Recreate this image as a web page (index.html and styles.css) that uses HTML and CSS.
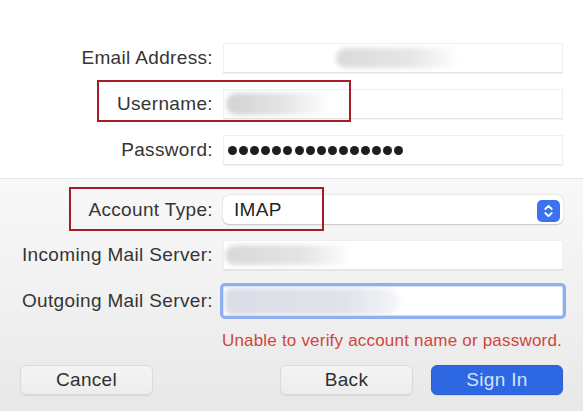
FILE: index.html
```html
<!DOCTYPE html>
<html>
<head>
<meta charset="utf-8">
<link rel="stylesheet" href="styles.css">
</head>
<body>
<div class="sheet">
  <div class="top">
    <div class="grid">
      <div class="lbl">Email Address:</div>
      <div class="field"><span class="blob blob-email"></span></div>
      <div class="lbl">Username:</div>
      <div class="field"><span class="blob blob-user"></span></div>
      <div class="lbl">Password:</div>
      <div class="field pw">
        <span class="dot"></span><span class="dot"></span><span class="dot"></span><span class="dot"></span>
        <span class="dot"></span><span class="dot"></span><span class="dot"></span><span class="dot"></span>
        <span class="dot"></span><span class="dot"></span><span class="dot"></span><span class="dot"></span>
        <span class="dot"></span><span class="dot"></span><span class="dot"></span><span class="dot"></span>
      </div>
    </div>
  </div>
  <div class="bottom">
    <div class="grid grid2">
      <div class="lbl">Account Type:</div>
      <div class="select">
        <span class="select-text">IMAP</span>
        <span class="stepper">
          <svg width="23" height="22" viewBox="0 0 23 22">
            <rect x="0" y="0" width="23" height="22" rx="5" fill="#3a72ef"/>
            <path d="M8.3 9 L11.5 5.8 L14.7 9" fill="none" stroke="#fff" stroke-width="1.8" stroke-linecap="round" stroke-linejoin="round"/>
            <path d="M8.3 13 L11.5 16.2 L14.7 13" fill="none" stroke="#fff" stroke-width="1.8" stroke-linecap="round" stroke-linejoin="round"/>
          </svg>
        </span>
      </div>
      <div class="lbl">Incoming Mail Server:</div>
      <div class="field"><span class="blob blob-in"></span></div>
      <div class="lbl">Outgoing Mail Server:</div>
      <div class="field focus"><span class="blob blob-out"></span></div>
    </div>
    <p class="error">Unable to verify account name or password.</p>
    <div class="buttons">
      <button class="btn">Cancel</button>
      <span class="spacer"></span>
      <button class="btn">Back</button>
      <button class="btn primary">Sign In</button>
    </div>
  </div>
  <div class="mark mark-user"></div>
  <div class="mark mark-type"></div>
</div>
</body>
</html>
```
FILE: styles.css
```css
html, body {
  margin: 0;
  padding: 0;
}
body {
  width: 583px;
  height: 411px;
  overflow: hidden;
  font-family: "Liberation Sans", Arial, sans-serif;
  background: #fff;
}
.sheet {
  position: relative;
  width: 583px;
  height: 411px;
}
.top {
  padding: 43px 0 13px;
  background: #fff;
}
.grid {
  display: grid;
  grid-template-columns: 213px 340px;
  grid-auto-rows: 30px;
  column-gap: 10px;
  row-gap: 16px;
}
.grid2 {
  grid-template-rows: 29px 30px 30px;
}
.lbl {
  display: flex;
  align-items: center;
  justify-content: flex-end;
  font-size: 19px;
  letter-spacing: 0.35px;
  color: #353535;
  white-space: nowrap;
}
.field {
  box-sizing: border-box;
  background: #fff;
  border: 1px solid #efefef;
  border-bottom-color: #e2e2e2;
  box-shadow: 0 1px 1px rgba(0,0,0,0.04);
  display: flex;
  align-items: center;
  overflow: hidden;
}
.blob {
  display: block;
  border-radius: 11px;
  filter: blur(2.5px);
}
.blob-email {
  margin-left: 112px;
  width: 124px;
  height: 20px;
  background: linear-gradient(90deg, #dadada, #e6e6e6 60%, rgba(240,240,240,0));
}
.blob-user {
  margin-left: 2px;
  width: 104px;
  height: 22px;
  background: linear-gradient(90deg, #d2d2d2, #e4e4e4 55%, rgba(245,245,245,0));
}
.blob-in {
  margin-left: 1px;
  width: 128px;
  height: 20px;
  background: linear-gradient(90deg, #d8d8d8, #e4e4e4 60%, rgba(240,240,240,0));
}
.blob-out {
  margin-left: 1px;
  width: 174px;
  height: 27px;
  border-radius: 6px 14px 14px 6px;
  background: linear-gradient(90deg, #dadde7, #e0e3eb 70%, rgba(230,232,238,0.4));
}
.pw {
  padding-left: 4px;
  gap: 2.1px;
}
.dot {
  width: 9px;
  height: 9px;
  border-radius: 50%;
  background: #1e1e1e;
  flex: none;
}
.bottom {
  border-top: 1px solid #e6e6e6;
  padding-top: 16px;
  height: 216px;
  background: linear-gradient(180deg, #f8f8f8 0%, #f1f1f1 50%, #e8e8e8 100%);
}
.select {
  box-sizing: border-box;
  background: #fff;
  border-radius: 6px;
  box-shadow: 0 0.5px 1.5px rgba(0,0,0,0.18), 0 0 0 0.5px rgba(0,0,0,0.05);
  display: flex;
  align-items: center;
  justify-content: space-between;
  padding: 0 3px 0 11px;
}
.select-text {
  font-size: 19px;
  color: #252525;
  letter-spacing: 0.3px;
}
.stepper {
  display: flex;
  margin-top: 2px;
}
.focus {
  outline: 3px solid #8eaff0;
  outline-offset: 0;
  border-radius: 2px;
  border-color: #d6e0f5;
}
.error {
  margin: 15px 0 0;
  padding-right: 21px;
  text-align: right;
  font-size: 17px;
  line-height: 20px;
  letter-spacing: 0.2px;
  color: #d0463a;
}
.buttons {
  display: flex;
  align-items: center;
  margin-top: 14px;
  padding: 0 20px;
  gap: 18px;
}
.spacer {
  flex: 1;
}
.btn {
  box-sizing: border-box;
  width: 133px;
  height: 30px;
  border: 1px solid #dadada;
  border-radius: 6px;
  background: linear-gradient(180deg, #f4f4f4, #ededed);
  box-shadow: 0 1px 1px rgba(0,0,0,0.08);
  font-family: "Liberation Sans", Arial, sans-serif;
  font-size: 19px;
  letter-spacing: 0.3px;
  color: #303030;
  padding: 0;
}
.primary {
  width: 132px;
  background: #2e67e2;
  border-color: #2a5fd6;
  color: #d7e2fb;
}
.mark {
  position: absolute;
  box-sizing: border-box;
  border: 2.5px solid #a61c24;
}
.mark-user {
  left: 97px;
  top: 80px;
  width: 254px;
  height: 42px;
}
.mark-type {
  left: 69px;
  top: 187px;
  width: 255px;
  height: 44px;
}
```
